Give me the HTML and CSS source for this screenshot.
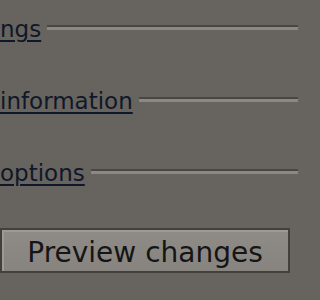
FILE: index.html
```html
<!DOCTYPE html>
<html>
<head>
<meta charset="utf-8">
<link rel="stylesheet" href="styles.css">
</head>
<body>
<div class="page">
  <div class="legend"><a class="link" href="#">ngs</a><span class="rule"></span></div>
  <div class="legend"><a class="link" href="#">information</a><span class="rule"></span></div>
  <div class="legend"><a class="link" href="#">options</a><span class="rule"></span></div>
  <button class="btn" type="button">Preview changes</button>
</div>
</body>
</html>
```
FILE: styles.css
```css
html, body {
  margin: 0;
  padding: 0;
  background: #67635e;
}
.page {
  width: 300px;
  height: 300px;
  overflow: hidden;
  padding-top: 15px;
  box-sizing: border-box;
  display: flex;
  flex-direction: column;
  gap: 44px;
  font-family: "DejaVu Sans", Verdana, sans-serif;
}
.legend {
  display: flex;
  align-items: flex-start;
  height: 28px;
  margin-right: 2px;
}
.link {
  font-size: 23px;
  line-height: 28px;
  color: #0f1829;
  text-decoration: underline;
  text-decoration-thickness: 2px;
  text-underline-offset: 3px;
  white-space: nowrap;
}
.rule {
  flex: 1;
  margin-left: 6px;
  margin-top: 10px;
  height: 0;
  border-top: 2px solid #4a4743;
  border-bottom: 3px solid #8c8984;
}
.btn {
  margin: -3px 10px 0 0;
  height: 45px;
  font-family: "DejaVu Sans", Verdana, sans-serif;
  font-size: 28px;
  color: #151515;
  background: linear-gradient(#8f8c88, #87847f);
  border: 2px solid #43403c;
  box-shadow: inset 2px 2px 0 #9d9a95;
  padding: 3px 0 0 0;
  text-align: center;
}
```
